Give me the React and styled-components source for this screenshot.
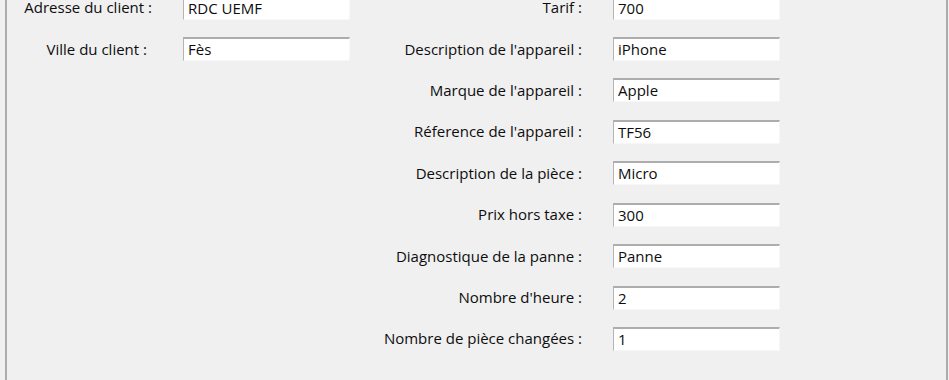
import React from "react";
import styled, { createGlobalStyle } from "styled-components";

const Global = createGlobalStyle`
  html, body { margin: 0; padding: 0; background: #f0f0f0; }
  body { font-family: "Open Sans", "Noto Sans", sans-serif; }
`;

const Page = styled.div`
  width: 949px;
  height: 380px;
  overflow: hidden;
  background: #f0f0f0;
`;

const Frame = styled.div`
  margin-left: 5px;
  width: 943px;
  height: 400px;
  box-sizing: border-box;
  border-left: 2px solid #acacac;
  border-right: 2px solid #acacac;
  margin-top: -4.4px;
`;

const Form = styled.div`
  display: grid;
  grid-template-columns: 145px 167px 201px 167px;
  grid-auto-rows: 24px;
  column-gap: 31px;
  row-gap: 17.43px;
`;

const Label = styled.div`
  grid-column: ${(p) => p.$col};
  grid-row: ${(p) => p.$row};
  display: flex;
  align-items: center;
  justify-content: flex-end;
  padding-right: ${(p) => p.$trail || 0}px;
  font-size: 15px;
  line-height: 15px;
  color: #0d0d0d;
  white-space: nowrap;
`;

const Field = styled.div`
  grid-column: ${(p) => p.$col};
  grid-row: ${(p) => p.$row};
  box-sizing: border-box;
  background: #fff;
  border-top: 2px solid #adadad;
  border-left: 1px solid #b4b4b4;
  border-right: 1px solid #f7f7f7;
  border-bottom: 1px solid #f7f7f7;
  padding-left: 4px;
  display: flex;
  align-items: center;
  font-size: 15px;
  line-height: 15px;
  color: #0d0d0d;
  white-space: nowrap;
  overflow: hidden;
`;

const left = [
  { label: "Adresse du client :", value: "RDC UEMF", trail: 0 },
  { label: "Ville du client :", value: "Fès", trail: 5 },
];

const right = [
  { label: "Tarif :", value: "700" },
  { label: "Description de l'appareil :", value: "iPhone" },
  { label: "Marque de l'appareil :", value: "Apple" },
  { label: "Réference de l'appareil :", value: "TF56" },
  { label: "Description de la pièce :", value: "Micro" },
  { label: "Prix hors taxe :", value: "300" },
  { label: "Diagnostique de la panne :", value: "Panne" },
  { label: "Nombre d'heure :", value: "2" },
  { label: "Nombre de pièce changées :", value: "1" },
];

export default function App() {
  return (
    <Page>
      <Global />
      <Frame>
        <Form>
          {left.map((r, i) => (
            <React.Fragment key={"l" + i}>
              <Label $col={1} $row={i + 1} $trail={r.trail}>{r.label}</Label>
              <Field $col={2} $row={i + 1}>{r.value}</Field>
            </React.Fragment>
          ))}
          {right.map((r, i) => (
            <React.Fragment key={"r" + i}>
              <Label $col={3} $row={i + 1}>{r.label}</Label>
              <Field $col={4} $row={i + 1}>{r.value}</Field>
            </React.Fragment>
          ))}
        </Form>
      </Frame>
    </Page>
  );
}
